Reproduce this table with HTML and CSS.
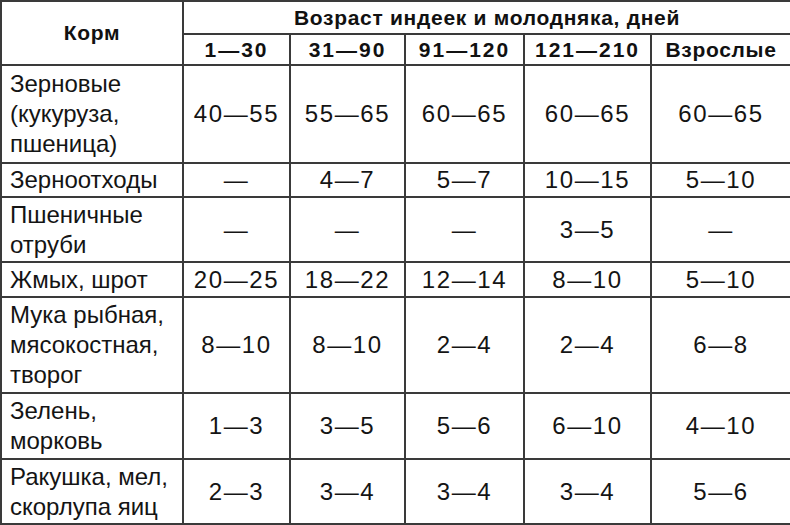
FILE: index.html
```html
<!DOCTYPE html>
<html lang="ru">
<head>
<meta charset="utf-8">
<link rel="stylesheet" href="styles.css">
</head>
<body>
<table class="feed">
  <colgroup>
    <col class="c-name">
    <col class="c1">
    <col class="c2">
    <col class="c3">
    <col class="c4">
    <col class="c5">
  </colgroup>
  <thead>
    <tr class="h1">
      <th rowspan="2" class="th-name">Корм</th>
      <th colspan="5">Возраст индеек и молодняка, дней</th>
    </tr>
    <tr class="h2">
      <th class="num">1—30</th>
      <th class="num">31—90</th>
      <th class="num">91—120</th>
      <th class="num">121—210</th>
      <th>Взрослые</th>
    </tr>
  </thead>
  <tbody>
    <tr class="r3">
      <td class="name">Зерновые<br>(кукуруза,<br>пшеница)</td>
      <td>40—55</td><td>55—65</td><td>60—65</td><td>60—65</td><td>60—65</td>
    </tr>
    <tr class="r1">
      <td class="name">Зерноотходы</td>
      <td>—</td><td>4—7</td><td>5—7</td><td>10—15</td><td>5—10</td>
    </tr>
    <tr class="r2">
      <td class="name">Пшеничные<br>отруби</td>
      <td>—</td><td>—</td><td>—</td><td>3—5</td><td>—</td>
    </tr>
    <tr class="r1b">
      <td class="name">Жмых, шрот</td>
      <td>20—25</td><td>18—22</td><td>12—14</td><td>8—10</td><td>5—10</td>
    </tr>
    <tr class="r3b">
      <td class="name">Мука рыбная,<br>мясокостная,<br>творог</td>
      <td>8—10</td><td>8—10</td><td>2—4</td><td>2—4</td><td>6—8</td>
    </tr>
    <tr class="r2b">
      <td class="name">Зелень,<br>морковь</td>
      <td>1—3</td><td>3—5</td><td>5—6</td><td>6—10</td><td>4—10</td>
    </tr>
    <tr class="r2">
      <td class="name">Ракушка, мел,<br>скорлупа яиц</td>
      <td>2—3</td><td>3—4</td><td>3—4</td><td>3—4</td><td>5—6</td>
    </tr>
  </tbody>
</table>
</body>
</html>
```

FILE: styles.css
```css
html, body {
  margin: 0;
  padding: 0;
  background: #ffffff;
}

.feed {
  width: 790px;
  border-collapse: collapse;
  table-layout: fixed;
  border: 2px solid #2e2e2e;
  font-family: "Liberation Sans", Arial, sans-serif;
  color: #141414;
}

.c-name { width: 182px; }
.c1 { width: 107px; }
.c2 { width: 115px; }
.c3 { width: 119px; }
.c4 { width: 127px; }
.c5 { width: 140px; }

.feed th,
.feed td {
  border: 2px solid #3a3a3a;
  padding: 0;
  text-align: center;
  vertical-align: middle;
}

.feed th {
  font-weight: bold;
  font-size: 21px;
  line-height: 24px;
  letter-spacing: 0.7px;
  color: #111111;
}

.feed th.num {
  letter-spacing: 2px;
}

.feed td {
  font-size: 24px;
  line-height: 30px;
  letter-spacing: 1.6px;
}

.feed td.name {
  text-align: left;
  padding-left: 8px;
  letter-spacing: 0;
}

.h1 { height: 33px; }
.h2 { height: 31px; }
.r3 { height: 98px; }
.r1 { height: 34px; }
.r2 { height: 65px; }
.r1b { height: 35px; }
.r3b { height: 96px; }
.r2b { height: 66px; }
```
